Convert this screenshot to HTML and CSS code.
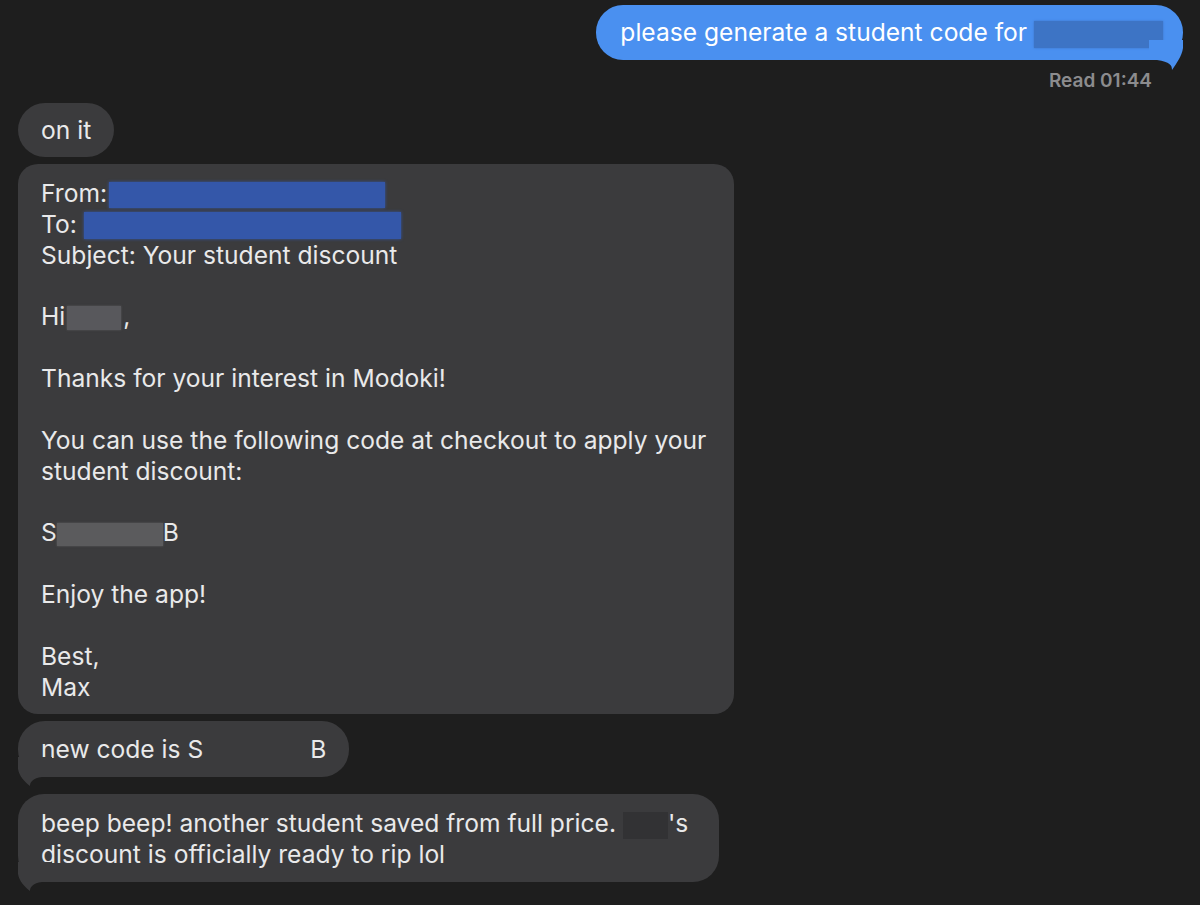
FILE: index.html
```html
<!DOCTYPE html>
<html>
<head>
<meta charset="utf-8">
<link rel="stylesheet" href="styles.css">
</head>
<body>
<div class="chat">
  <div class="row out">
    <div class="bubble blue">please generate a student code for <span class="redact r-blue"></span>
      <svg class="tail tail-right" width="34" height="32" viewBox="-34 -20 34 32"><path d="M0,-22 L0,-12 C-1,-4 -7,4 -11,10 C-11,5 -13,2 -26,0 L-34,0 L-34,-22 Z" fill="#4a90f0"/></svg>
    </div>
  </div>
  <div class="read">Read 01:44</div>
  <div class="row in">
    <div class="bubble gray">on it</div>
  </div>
  <div class="row in">
    <div class="bubble gray email">From:<span class="redact r-from"></span><br>
To: <span class="redact r-to"></span><br>
Subject: Your student discount<br>
<br>
Hi<span class="redact r-hi"></span>,<br>
<br>
Thanks for your interest in Modoki!<br>
<br>
You can use the following code at checkout to apply your<br>
student discount:<br>
<br>
S<span class="redact r-code"></span>B<br>
<br>
Enjoy the app!<br>
<br>
Best,<br>
Max</div>
  </div>
  <div class="row in">
    <div class="bubble gray code">new code is S <span class="blank"></span>B
      <svg class="tail tail-left" width="34" height="32" viewBox="0 -20 34 32"><path d="M0,-22 L0,-8 C1,-1 7,5 12,9 C12,5 15,1 24,0 L34,0 L34,-22 Z" fill="#3b3b3d"/></svg>
    </div>
  </div>
  <div class="row in last">
    <div class="bubble gray final">beep beep! another student saved from full price. <span class="redact r-name"></span>'s<br>discount is officially ready to rip lol
      <svg class="tail tail-left" width="34" height="32" viewBox="0 -20 34 32"><path d="M0,-22 L0,-8 C1,-1 7,5 12,9 C12,5 15,1 24,0 L34,0 L34,-22 Z" fill="#3b3b3d"/></svg>
    </div>
  </div>
</div>
</body>
</html>
```
FILE: styles.css
```css
html, body {
  margin: 0;
  padding: 0;
  background: #1e1e1e;
}
body {
  width: 1200px;
  height: 905px;
  overflow: hidden;
  font-family: Inter, "Noto Sans", "Liberation Sans", sans-serif;
  font-size: 24.6px;
  line-height: 31px;
  color: #e9e9ea;
}
.chat {
  display: flex;
  flex-direction: column;
  padding: 5px 17px 0 18px;
}
.row {
  display: flex;
}
.row.out {
  justify-content: flex-end;
}
.row.in {
  justify-content: flex-start;
  margin-top: 7px;
}
.row.last {
  margin-top: 17px;
}
.bubble {
  position: relative;
  border-radius: 27px;
  padding: 12px 23px 11px 23px;
  white-space: nowrap;
}
.bubble.blue {
  background: #4a90f0;
  color: #ffffff;
  padding: 12px 20px 12px 24px;
}
.bubble.gray {
  background: #3b3b3d;
}
.bubble.email {
  border-radius: 20px;
  width: 670px;
  line-height: 30.85px;
  padding: 14px 23px 12px 23px;
}
.bubble.code {
  padding: 13px 23px 12px 23px;
}
.bubble.final {
  border-radius: 26px;
  padding: 14px 31px 12px 23px;
}
.read {
  align-self: flex-end;
  margin: 8px 31px 0 0;
  font-size: 19px;
  line-height: 26px;
  font-weight: 600;
  color: #8c8c8e;
}
.row.out + .read + .row.in {
  margin-top: 9px;
}
.redact {
  display: inline-block;
  vertical-align: -6px;
}
.r-blue {
  width: 129px;
  height: 27px;
  background: #3d74c5;
  box-shadow: 0 0 2px #3d74c5;
  vertical-align: -7px;
}
.r-from {
  width: 276px;
  height: 26px;
  margin-left: 2px;
  background: #3457a9;
  box-shadow: 0 0 3px #3457a9;
}
.r-to {
  width: 317px;
  height: 27px;
  background: #3457a9;
  box-shadow: 0 0 3px #3457a9;
}
.r-hi {
  width: 54px;
  height: 24px;
  margin: 0 2px 0 2px;
  background: #58585c;
  box-shadow: 0 0 2px #58585c;
  vertical-align: -5px;
}
.r-code {
  width: 106px;
  height: 23px;
  background: #5b5b5d;
  box-shadow: 0 0 2px #5b5b5d;
  vertical-align: -5px;
}
.r-name {
  width: 45px;
  height: 27px;
  background: #323234;
  vertical-align: -7px;
}
.blank {
  display: inline-block;
  width: 100px;
}
.tail {
  position: absolute;
  bottom: -12px;
}
.tail-left {
  left: 0;
}
.tail-right {
  right: 0;
}
```
